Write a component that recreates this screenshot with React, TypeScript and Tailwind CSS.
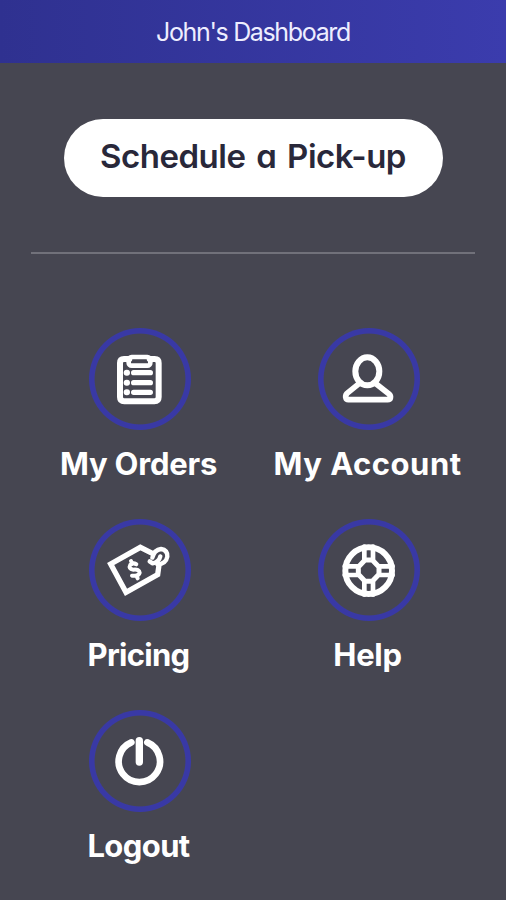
import React from 'react';

type IconProps = {
  viewBox: string;
  children: React.ReactNode;
};

// White line drawing, sized to fill the ring around it
const Icon: React.FC<IconProps> = ({ viewBox, children }) => (
  <svg
    viewBox={viewBox}
    className="size-full"
    fill="none"
    stroke="#fff"
    strokeWidth="16"
    strokeLinecap="round"
    strokeLinejoin="round"
  >
    {children}
  </svg>
);

const OrdersIcon = () => (
  <Icon viewBox="25 25 306 306">
    <path d="M146 118H130Q118 118 118 130V232Q118 245 131 245H221Q234 245 234 232V130Q234 118 222 118H207" strokeWidth="18" />
    <rect x="144" y="112" width="65" height="26" rx="9" strokeWidth="14" />
    <path d="M159 159H209M159 189H209M159 218H209" strokeWidth="16" />
    <path d="M138 159H139M138 189H139M138 218H139" strokeWidth="18" />
  </Icon>
);

const AccountIcon = () => (
  <Icon viewBox="29 25 306 306">
    <ellipse cx="177" cy="155" rx="36" ry="42" strokeWidth="18" />
    <path d="M153 191L116 221Q110 228 113 236Q114 240 120 240H238Q245 240 246 236Q248 228 242 223L201 191" strokeWidth="17" />
  </Icon>
);

const PricingIcon = () => (
  <Icon viewBox="26 28 306 306">
    <path d="M216 131L180 113L91 163L137 248L232 195L236 166" strokeWidth="16" strokeLinejoin="miter" />
    <path d="M208 155L217 161Q236 158 240 140" strokeWidth="13" />
    <path d="M216 144Q222 120 242 118Q262 121 261 141Q257 163 231 164" strokeWidth="13" />
    <path d="M168 164Q158 158 150 165Q143 178 159 180Q177 178 178 189Q175 201 155 198M152 154L156 163M168 198L172 206" strokeWidth="12" />
  </Icon>
);

const HelpIcon = () => (
  <Icon viewBox="28 27 306 306">
    <circle cx="180" cy="182" r="70" strokeWidth="18" />
    <path d="M169 150H191L211 171V193L191 214H169L149 193V171Z" strokeWidth="15" />
    <path d="M167 110V148M193 110V148M167 216V254M193 216V254M108 169H146M108 195H146M214 169H252M214 195H252" strokeWidth="14" />
  </Icon>
);

const LogoutIcon = () => (
  <Icon viewBox="26 29 306 306">
    <path d="M153 126A62 62 0 1 0 201 126" strokeWidth="20" />
    <path d="M177 121V185" strokeWidth="22" />
  </Icon>
);

type MenuItem = {
  label: string;
  icon: React.FC;
  labelClass: string;
};

const menuItems: MenuItem[] = [
  { label: 'My Orders', icon: OrdersIcon, labelClass: 'tracking-[-0.2px]' },
  { label: 'My Account', icon: AccountIcon, labelClass: 'tracking-[0.5px]' },
  { label: 'Pricing', icon: PricingIcon, labelClass: 'tracking-[-0.7px]' },
  { label: 'Help', icon: HelpIcon, labelClass: 'tracking-[-0.3px]' },
  { label: 'Logout', icon: LogoutIcon, labelClass: 'tracking-[-0.6px]' },
];

const MenuTile: React.FC<{ item: MenuItem }> = ({ item }) => {
  const ItemIcon = item.icon;

  return (
    <button className="flex h-[191px] flex-col items-center">
      <span className="flex size-[102px] rounded-full bg-[radial-gradient(circle_closest-side,transparent_88%,#3939a5_90%)]">
        <ItemIcon />
      </span>
      <span
        className={`mt-[14px] mr-0.5 whitespace-nowrap text-[31px] leading-10 font-bold text-white ${item.labelClass}`}
      >
        {item.label}
      </span>
    </button>
  );
};

export default function App() {
  return (
    <div className="flex h-[900px] w-[506px] flex-col overflow-hidden bg-[#464651] font-['Inter','Liberation_Sans',sans-serif] [font-feature-settings:'cv11','ss03']">
      {/* Header */}
      <header className="flex h-[63px] shrink-0 items-center justify-center bg-linear-to-r from-[#2f3190] to-[#3b3cad]">
        <h1 className="text-[25px] leading-8 font-normal tracking-[-1.35px] text-[#eeeeff] [font-feature-settings:normal]">
          John's Dashboard
        </h1>
      </header>

      <main className="flex flex-col">
        <button className="mx-auto mt-14 flex h-[78px] w-[379px] items-center justify-center rounded-full bg-white pb-0.5 text-[33px] font-semibold tracking-[-0.5px] whitespace-nowrap text-[#29283a] [word-spacing:3px]">
          Schedule a Pick-up
        </button>

        <hr className="mx-[31px] mt-[55px] h-0.5 border-0 bg-[#71717a]" />

        {/* Menu */}
        <nav className="mt-[74px] ml-[25px] grid w-[458px] grid-cols-2">
          {menuItems.map((item) => (
            <MenuTile key={item.label} item={item} />
          ))}
        </nav>
      </main>
    </div>
  );
}
